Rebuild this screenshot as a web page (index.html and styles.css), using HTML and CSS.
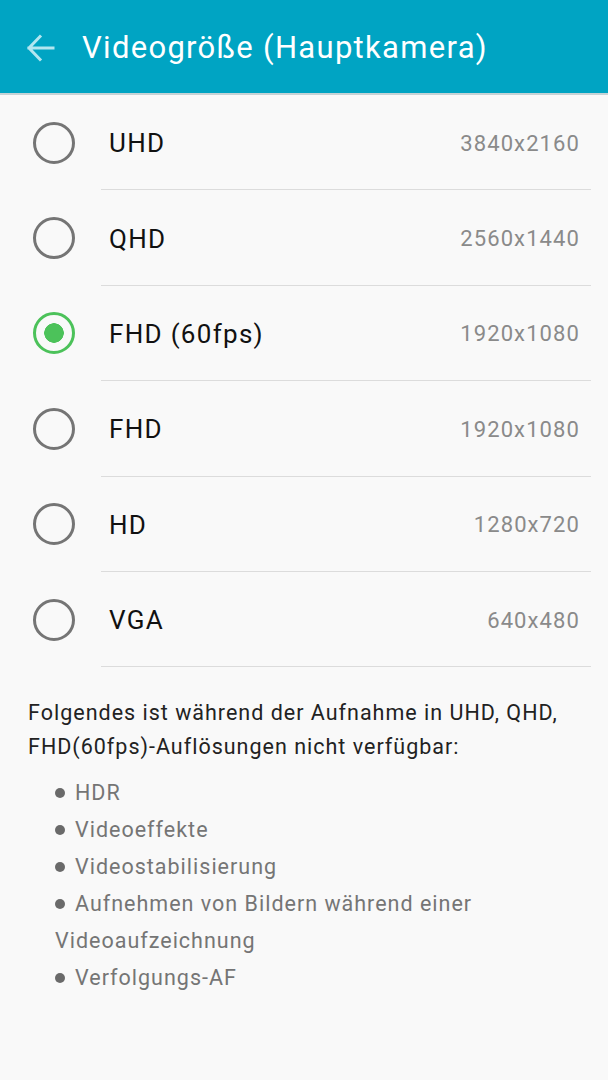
FILE: index.html
```html
<!DOCTYPE html>
<html lang="de">
<head>
<meta charset="utf-8">
<link rel="stylesheet" href="styles.css">
</head>
<body>
<header class="appbar">
  <svg class="back" width="30" height="30" viewBox="0 0 30 30">
    <path d="M27 15H3M14 3.5L3 15l11 11.5" fill="none" stroke="#b3e6f0" stroke-width="3" stroke-linecap="square"/>
  </svg>
  <h1 class="title">Videogröße (Hauptkamera)</h1>
</header>
<main>
  <ul class="options">
    <li class="option"><span class="radio"></span><div class="body"><span class="label">UHD</span><span class="value">3840x2160</span></div></li>
    <li class="option"><span class="radio"></span><div class="body"><span class="label">QHD</span><span class="value">2560x1440</span></div></li>
    <li class="option"><span class="radio checked"></span><div class="body"><span class="label">FHD (60fps)</span><span class="value">1920x1080</span></div></li>
    <li class="option"><span class="radio"></span><div class="body"><span class="label">FHD</span><span class="value">1920x1080</span></div></li>
    <li class="option"><span class="radio"></span><div class="body"><span class="label">HD</span><span class="value">1280x720</span></div></li>
    <li class="option"><span class="radio"></span><div class="body"><span class="label">VGA</span><span class="value">640x480</span></div></li>
  </ul>
  <section class="note">
    <p class="intro">Folgendes ist während der Aufnahme in UHD, QHD, FHD(60fps)-Auflösungen nicht verfügbar:</p>
    <ul class="bullets">
      <li><span class="dot"></span>HDR</li>
      <li><span class="dot"></span>Videoeffekte</li>
      <li><span class="dot"></span>Videostabilisierung</li>
      <li><span class="dot"></span>Aufnehmen von Bildern während einer Videoaufzeichnung</li>
      <li><span class="dot"></span>Verfolgungs-AF</li>
    </ul>
  </section>
</main>
</body>
</html>
```
FILE: styles.css
```css
* { box-sizing: border-box; }
html, body { margin: 0; padding: 0; }
body {
  width: 608px;
  height: 1080px;
  background: #f9f9f9;
  font-family: Roboto, "Noto Sans", sans-serif;
  overflow: hidden;
}
.appbar {
  height: 95px;
  background: #00a4c3;
  border-bottom: 2px solid #c6d3d6;
  display: flex;
  align-items: center;
  padding-left: 26px;
}
.back { display: block; flex: none; margin-top: 2px; }
.title {
  margin: 0 0 0 26px;
  font-weight: 400;
  font-size: 31px;
  color: #ffffff;
  letter-spacing: 1.3px;
  padding-top: 1px;
}
.options { list-style: none; margin: 0; padding: 0; }
.option {
  display: flex;
  height: 95.4px;
}
.radio {
  flex: none;
  width: 101px;
  display: flex;
  align-items: center;
  justify-content: center;
}
.radio::before {
  content: "";
  width: 36px;
  height: 36px;
  border-radius: 50%;
  border: 3px solid #757575;
  margin-left: 6px;
}
.radio.checked::before {
  border-color: #4cc25a;
  background: radial-gradient(circle, #4cc25a 0 9.5px, transparent 10px);
}
.body {
  flex: 1;
  margin-right: 17px;
  border-bottom: 1px solid #dcdcdc;
  display: flex;
  align-items: center;
  justify-content: space-between;
  padding: 2px 11px 0 8px;
}
.label { font-size: 26px; color: #111; letter-spacing: 1.3px; }
.value { font-size: 22px; color: #8a8a8a; letter-spacing: 1.1px; }
.note { padding: 29px 20px 0 28px; }
.intro {
  margin: 0;
  font-size: 21.5px;
  line-height: 34px;
  color: #222;
  letter-spacing: 1px;
}
.bullets {
  list-style: none;
  margin: 10px 0 0 0;
  padding: 0 0 0 27px;
  font-size: 21.5px;
  line-height: 37px;
  color: #757575;
  letter-spacing: 1px;
}
.dot {
  display: inline-block;
  width: 10px;
  height: 10px;
  border-radius: 50%;
  background: #6a6a6a;
  margin-right: 10px;
  vertical-align: 2px;
}
```
